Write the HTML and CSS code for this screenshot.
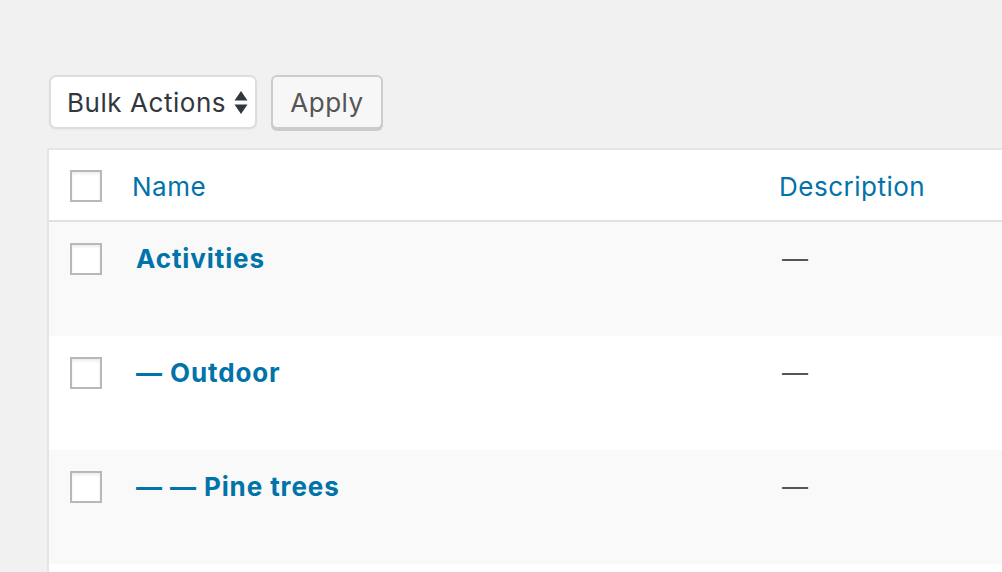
FILE: index.html
```html
<!DOCTYPE html>
<html>
<head>
<meta charset="utf-8">
<link rel="stylesheet" href="styles.css">
</head>
<body>
<div class="wrap">
  <div class="tablenav">
    <div class="select">
      <span class="select-label">Bulk Actions</span>
      <svg class="arrows" width="14" height="26" viewBox="0 0 14 26"><path d="M7 1 L13.5 10.5 L0.5 10.5 Z M0.5 14.5 L13.5 14.5 L7 24 Z" fill="#32373c"/></svg>
    </div>
    <div class="button">Apply</div>
  </div>
  <div class="table">
    <div class="row head">
      <div class="cell check"><span class="cb"></span></div>
      <div class="cell name"><span class="link">Name</span></div>
      <div class="cell desc"><span class="link">Description</span></div>
    </div>
    <div class="row alt">
      <div class="cell check"><span class="cb"></span></div>
      <div class="cell name"><span class="title">Activities</span></div>
      <div class="cell desc"><span class="dash">—</span></div>
    </div>
    <div class="row">
      <div class="cell check"><span class="cb"></span></div>
      <div class="cell name"><span class="title">— Outdoor</span></div>
      <div class="cell desc"><span class="dash">—</span></div>
    </div>
    <div class="row alt">
      <div class="cell check"><span class="cb"></span></div>
      <div class="cell name"><span class="title">— — Pine trees</span></div>
      <div class="cell desc"><span class="dash">—</span></div>
    </div>
    <div class="row"></div>
  </div>
</div>
</body>
</html>
```
FILE: styles.css
```css
html, body {
  margin: 0;
  padding: 0;
  background: #f1f1f1;
  font-family: Inter, "Liberation Sans", sans-serif;
  overflow: hidden;
}
.wrap {
  padding-top: 75px;
  padding-left: 47px;
}
.tablenav {
  display: flex;
  gap: 14px;
  margin-left: 2px;
  margin-bottom: 18px;
  height: 55px;
}
.select {
  box-sizing: border-box;
  width: 208px;
  height: 54px;
  background: #fff;
  border: 2px solid #dddddd;
  border-radius: 7px;
  display: flex;
  align-items: center;
  padding-left: 16px;
  box-shadow: 0 1px 2px rgba(0,0,0,0.04);
}
.select-label {
  font-size: 26px;
  color: #32373c;
  letter-spacing: 0.55px;
}
.arrows {
  margin-left: 8px;
  margin-top: 2px;
}
.button {
  box-sizing: border-box;
  width: 112px;
  height: 54px;
  background: #f7f7f7;
  border: 2px solid #cccccc;
  border-radius: 6px;
  box-shadow: 0 2px 0 #cccccc;
  display: flex;
  align-items: center;
  justify-content: center;
  font-size: 26px;
  color: #555;
  letter-spacing: 0.5px;
}
.table {
  border-top: 2px solid #e5e5e5;
  border-left: 2px solid #e5e5e5;
  background: #fff;
  width: 1200px;
}
.row {
  display: flex;
  height: 114px;
  background: #fff;
}
.row.alt {
  background: #f9f9f9;
}
.row.head {
  height: 70px;
  border-bottom: 2px solid #e1e1e1;
  align-items: center;
}
.cell {
  box-sizing: border-box;
}
.check {
  width: 83px;
  padding-left: 21px;
}
.row:not(.head) .check {
  padding-top: 21px;
}
.row.head .check {
  padding-top: 1px;
}
.row.head .name,
.row.head .desc {
  padding-top: 4px;
}
.cb {
  display: block;
  box-sizing: border-box;
  width: 32px;
  height: 32px;
  border: 2px solid #b4b9be;
  background: #fff;
  box-shadow: inset 0 2px 3px rgba(0,0,0,0.08);
}
.name {
  width: 647px;
}
.row:not(.head) .name,
.row:not(.head) .desc {
  padding-top: 19px;
  line-height: 36px;
}
.row:not(.head) .name {
  padding-left: 4px;
}
.link {
  font-size: 26px;
  color: #0073aa;
  line-height: 36px;
  letter-spacing: 0.5px;
}
.title {
  font-size: 26px;
  font-weight: 700;
  color: #0073aa;
  letter-spacing: 0.9px;
}
.dash {
  font-size: 26px;
  color: #555;
  padding-left: 3px;
}
```
